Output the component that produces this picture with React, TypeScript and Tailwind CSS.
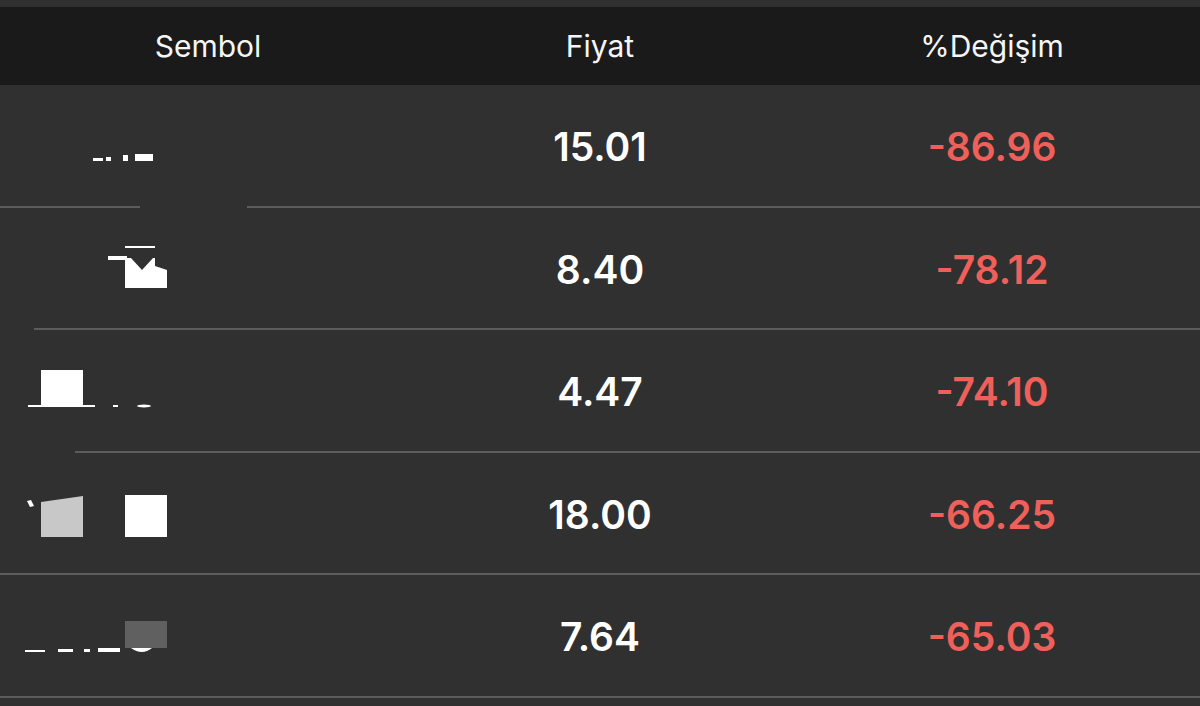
import React from 'react';

type Row = { price: string; change: string; marks: React.ReactNode; gap?: [number, number] };

const rows: Row[] = [
  {
    price: '15.01',
    change: '-86.96',
    gap: [140, 247],
    marks: (
      <>
        <rect x="93" y="73" width="10" height="3" fill="#fff" />
        <rect x="106" y="72" width="5" height="4" fill="#fff" />
        <rect x="123" y="70" width="5" height="6" fill="#fff" />
        <rect x="135" y="69" width="18" height="7" fill="#fff" />
      </>
    ),
  },
  {
    price: '8.40',
    change: '-78.12',
    gap: [0, 34],
    marks: (
      <>
        <rect x="125" y="38" width="30" height="2" fill="#fff" />
        <rect x="108" y="48" width="19" height="4" fill="#fff" />
        <polygon points="125,50 131,50 142,62 153,50 155,50 155,58 167,62 167,80 125,80" fill="#fff" />
      </>
    ),
  },
  {
    price: '4.47',
    change: '-74.10',
    gap: [0, 75],
    marks: (
      <>
        <rect x="41" y="40" width="42" height="36" fill="#fff" />
        <rect x="28" y="75" width="67" height="2" fill="#fff" />
        <rect x="113" y="75" width="5" height="2" fill="#fff" />
        <ellipse cx="144" cy="76" rx="7" ry="1.5" fill="#fff" />
      </>
    ),
  },
  {
    price: '18.00',
    change: '-66.25',
    marks: (
      <>
        <polygon points="27,48 31,47 34,53 30,54" fill="#fff" />
        <polygon points="41,49 83,43 83,84 41,84" fill="#c8c8c8" />
        <rect x="125" y="42" width="42" height="42" fill="#fff" />
      </>
    ),
  },
  {
    price: '7.64',
    change: '-65.03',
    marks: (
      <>
        <rect x="125" y="46" width="42" height="27" fill="#606060" />
        <rect x="25" y="75" width="20" height="2" fill="#fff" />
        <rect x="58" y="74" width="15" height="3" fill="#fff" />
        <rect x="84" y="74" width="6" height="3" fill="#fff" />
        <rect x="98" y="73" width="22" height="4" fill="#fff" />
        <path d="M131 73 Q142 81 152 73 Z" fill="#fff" />
      </>
    ),
  },
];

const Separator = ({ gap }: { gap?: [number, number] }) =>
  gap ? (
    <div className="flex h-[2px]">
      <div className="h-full bg-[#5c5c5c]" style={{ width: gap[0] }} />
      <div className="h-full" style={{ width: gap[1] - gap[0] }} />
      <div className="h-full flex-1 bg-[#5c5c5c]" />
    </div>
  ) : (
    <div className="h-[2px] bg-[#5c5c5c]" />
  );

export default function App() {
  return (
    <div className="w-[1200px] h-[706px] overflow-hidden bg-[#303030] pt-[7px] font-['Inter','Liberation_Sans',sans-serif] text-white">
      <div className="grid grid-cols-3 h-[78px] items-center bg-[#1a1a1a] px-3 text-[30px] text-[#f5f5f5]">
        <div className="text-center">Sembol</div>
        <div className="text-center">Fiyat</div>
        <div className="text-center">%Değişim</div>
      </div>
      {rows.map((r, i) => (
        <div key={i}>
          <div className="relative grid grid-cols-3 h-[120.5px] items-center px-3 pt-[4px] text-[39px] font-semibold">
            <svg className="absolute left-0 top-0" width="300" height="121" viewBox="0 0 300 121">
              {r.marks}
            </svg>
            <div />
            <div className="text-center">{r.price}</div>
            <div className="text-center text-[#f0605a]">{r.change}</div>
          </div>
          <Separator gap={r.gap} />
        </div>
      ))}
    </div>
  );
}
